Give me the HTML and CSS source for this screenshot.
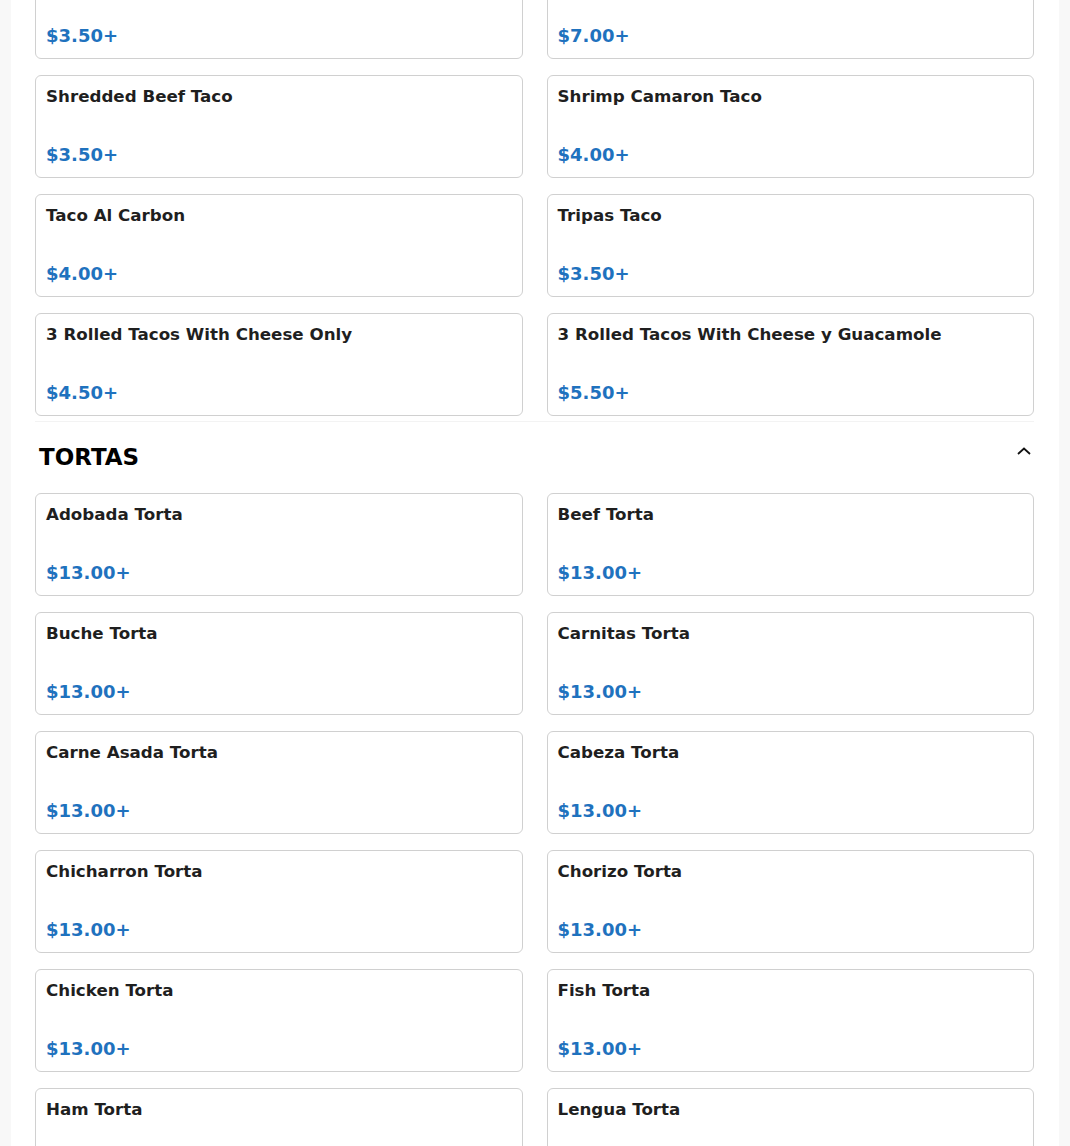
FILE: index.html
```html
<!DOCTYPE html>
<html lang="en">
<head>
<meta charset="utf-8">
<title>Menu</title>
<link rel="stylesheet" href="styles.css">
</head>
<body>
<main class="page">
  <section class="section">
    <div class="grid">
      <div class="card"><div class="name">Adobada Taco</div><div class="price">$3.50+</div></div>
      <div class="card"><div class="name">Fish Taco</div><div class="price">$7.00+</div></div>
      <div class="card"><div class="name">Shredded Beef Taco</div><div class="price">$3.50+</div></div>
      <div class="card"><div class="name">Shrimp Camaron Taco</div><div class="price">$4.00+</div></div>
      <div class="card"><div class="name">Taco Al Carbon</div><div class="price">$4.00+</div></div>
      <div class="card"><div class="name">Tripas Taco</div><div class="price">$3.50+</div></div>
      <div class="card"><div class="name">3 Rolled Tacos With Cheese Only</div><div class="price">$4.50+</div></div>
      <div class="card"><div class="name">3 Rolled Tacos With Cheese y Guacamole</div><div class="price">$5.50+</div></div>
    </div>
  </section>
  <section class="section">
    <div class="section-head">
      <h2 class="section-title">TORTAS</h2>
      <svg class="chevron" width="14" height="8" viewBox="0 0 14 8" aria-hidden="true"><path d="M1 7 L7 1.5 L13 7" fill="none" stroke="#111" stroke-width="1.8"/></svg>
    </div>
    <div class="grid">
      <div class="card"><div class="name">Adobada Torta</div><div class="price">$13.00+</div></div>
      <div class="card"><div class="name">Beef Torta</div><div class="price">$13.00+</div></div>
      <div class="card"><div class="name">Buche Torta</div><div class="price">$13.00+</div></div>
      <div class="card"><div class="name">Carnitas Torta</div><div class="price">$13.00+</div></div>
      <div class="card"><div class="name">Carne Asada Torta</div><div class="price">$13.00+</div></div>
      <div class="card"><div class="name">Cabeza Torta</div><div class="price">$13.00+</div></div>
      <div class="card"><div class="name">Chicharron Torta</div><div class="price">$13.00+</div></div>
      <div class="card"><div class="name">Chorizo Torta</div><div class="price">$13.00+</div></div>
      <div class="card"><div class="name">Chicken Torta</div><div class="price">$13.00+</div></div>
      <div class="card"><div class="name">Fish Torta</div><div class="price">$13.00+</div></div>
      <div class="card"><div class="name">Ham Torta</div><div class="price">$13.00+</div></div>
      <div class="card"><div class="name">Lengua Torta</div><div class="price">$13.00+</div></div>
    </div>
  </section>
</main>
</body>
</html>
```
FILE: styles.css
```css
html, body {
  margin: 0;
  padding: 0;
}
body {
  background: #f8f8f8;
  font-family: "DejaVu Sans", "Liberation Sans", sans-serif;
  overflow: hidden;
  height: 1146px;
}
.page {
  width: 1048px;
  margin: -44px auto 0;
  background: #ffffff;
  padding: 0 25px 40px 24px;
  box-sizing: border-box;
  min-height: 1400px;
}
.grid {
  display: grid;
  grid-template-columns: 1fr 1fr;
  column-gap: 24px;
  row-gap: 16px;
}
.card {
  box-sizing: border-box;
  height: 103px;
  border: 1px solid #d0d0d0;
  border-radius: 6px;
  padding: 10px 10px 12px;
  display: flex;
  flex-direction: column;
  justify-content: space-between;
}
.name {
  font-size: 16.7px;
  font-weight: bold;
  color: #1f1f1f;
  line-height: 20px;
}
.price {
  font-size: 18px;
  font-weight: bold;
  color: #1f72be;
  line-height: 21px;
}
.section-head {
  margin-top: 5px;
  border-top: 1px solid #f3f3f3;
  padding: 22px 4px 22px;
  display: flex;
  align-items: center;
  justify-content: space-between;
}
.section-title {
  margin: 0;
  font-size: 23px;
  font-weight: bold;
  color: #000;
  line-height: 27px;
}
.chevron {
  display: block;
  margin-top: -14px;
  margin-right: -1px;
}
```
